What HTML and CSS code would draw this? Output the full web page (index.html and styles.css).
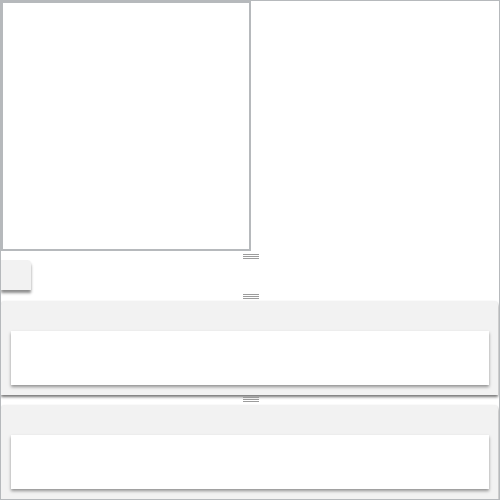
FILE: index.html
```html
<!DOCTYPE html>
<html lang="en">
<head>
  <meta charset="UTF-8" />
  <meta name="viewport" content="width=device-width, initial-scale=1.0"/>
  <title>Split panes</title>
  <link rel="stylesheet" href="styles.css">
</head>
<body>
  <div class="frame">
    <div class="editor"></div>

    <div class="grip grip-top"><span></span></div>

    <div class="tab"></div>

    <div class="grip grip-mid"><span></span></div>

    <div class="panel">
      <div class="card"></div>
    </div>

    <div class="grip grip-low"><span></span></div>

    <div class="panel">
      <div class="card"></div>
    </div>
  </div>
</body>
</html>
```

FILE: styles.css
```css
* {
  box-sizing: border-box;
  margin: 0;
  padding: 0;
}

body {
  background-color: white;
  font-family: "Liberation Sans", Arial, sans-serif;
}

.frame {
  width: 500px;
  height: 500px;
  border: 1px solid #b6b9bc;
  overflow: hidden;
  display: flex;
  flex-direction: column;
}

.editor {
  width: 250px;
  height: 250px;
  flex-shrink: 0;
  border: 2px solid #b6b9bc;
  background-color: white;
}

.grip {
  display: flex;
  justify-content: center;
  flex-shrink: 0;
  padding-left: 2px;
}

.grip span {
  display: block;
  width: 16px;
  height: 5px;
  background: repeating-linear-gradient(to bottom, #9c9c9c 0, #9c9c9c 1px, transparent 1px, transparent 2px);
}

.grip-top {
  height: 9px;
  padding-top: 3px;
}

.grip-mid {
  height: 11px;
  padding-top: 4px;
}

.grip-low {
  height: 10px;
  padding-top: 2px;
  position: relative;
  z-index: 1;
}

.tab {
  width: 30px;
  height: 30px;
  flex-shrink: 0;
  background-color: #f2f2f2;
  border-top-right-radius: 4px;
  box-shadow: 0 3px 3px rgba(0, 0, 0, 0.45);
}

.panel {
  width: 497px;
  height: 94px;
  flex-shrink: 0;
  padding: 30px 9px 10px 10px;
  background-color: #f2f2f2;
  border-radius: 4px 4px 0 0;
  box-shadow: 0 2px 3px rgba(0, 0, 0, 0.55);
}

.card {
  height: 54px;
  background-color: white;
  box-shadow: 0 2px 3px rgba(0, 0, 0, 0.4);
}
```
